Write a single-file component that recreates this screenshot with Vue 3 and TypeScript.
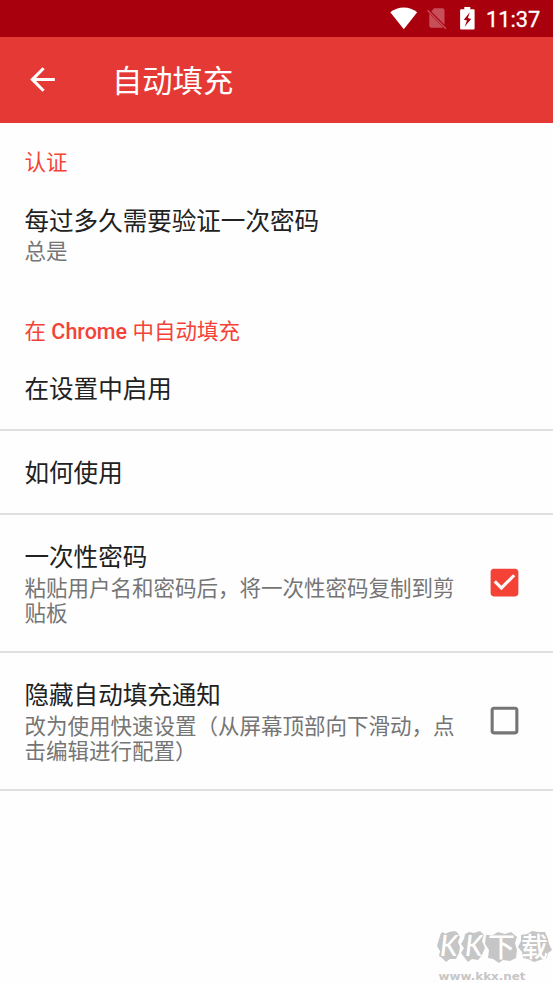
<script setup lang="ts">
import { ref } from 'vue'

interface Preference {
  title: string
  summary?: string
  checked?: boolean
}

interface HeadingPart {
  text: string
  latin?: boolean
}

interface Section {
  heading: HeadingPart[]
  divided: boolean
  items: Preference[]
}

const sections = ref<Section[]>([
  {
    heading: [{ text: '认证' }],
    divided: false,
    items: [{ title: '每过多久需要验证一次密码', summary: '总是' }],
  },
  {
    heading: [{ text: '在 ' }, { text: 'Chrome', latin: true }, { text: ' 中自动填充' }],
    divided: true,
    items: [
      { title: '在设置中启用' },
      { title: '如何使用' },
      { title: '一次性密码', summary: '粘贴用户名和密码后，将一次性密码复制到剪贴板', checked: true },
      { title: '隐藏自动填充通知', summary: '改为使用快速设置（从屏幕顶部向下滑动，点击编辑进行配置）', checked: false },
    ],
  },
])

function toggle(item: Preference) {
  if (item.checked !== undefined) item.checked = !item.checked
}
</script>

<template>
  <div class="screen">
    <div class="status">
      <svg class="wifi" width="28" height="23" viewBox="0 0 28 23">
        <path d="M.3 5.2C8-1.2 19.500-1.200 27.200 5.200L13.800 22.200Z" fill="#fff" />
      </svg>
      <svg class="sim" width="20" height="22" viewBox="0 0 20 22">
        <path d="M7 .3H15.500Q17.500 .3 17.500 2.300V16.800L4.300 3.600ZM2.300 5.500L16.500 19.700H4.300Q2.300 19.700 2.300 17.700Z" fill="#c74f5a" />
        <path d="M.5 2.300L19 20.800" stroke="#c74f5a" stroke-width="1.500" />
      </svg>
      <svg class="battery" width="15" height="23" viewBox="0 0 15 23">
        <path fill="#fff" fill-rule="evenodd" d="M4.300 0H10.300V2.300H13.500Q14.600 2.300 14.600 3.400V21.500Q14.600 22.600 13.500 22.600H1.200Q.1 22.600 .1 21.500V3.400Q.1 2.300 1.200 2.300H4.300ZM9.800 5.300L3.800 12.800L7 13.600L4.600 19.800L11.200 12L7.900 11Z" />
      </svg>
      <span class="time">11:37</span>
    </div>

    <header class="toolbar">
      <svg class="back" width="37" height="37" viewBox="0 0 24 24">
        <path fill="#fff" d="M20 11H7.830l5.590-5.590L12 4l-8 8 8 8 1.410-1.410L7.830 13H20v-2z" />
      </svg>
      <h1>自动填充</h1>
    </header>

    <main>
      <section v-for="(section, index) in sections" :key="index" :class="{ divided: section.divided }">
        <h2><span v-for="part in section.heading" :key="part.text" :class="{ latin: part.latin }">{{ part.text }}</span></h2>
        <div v-for="item in section.items" :key="item.title" class="row" :class="{ detailed: item.summary }" @click="toggle(item)">
          <div class="text">
            <div class="title">{{ item.title }}</div>
            <div v-if="item.summary" class="summary">{{ item.summary }}</div>
          </div>
          <svg v-if="item.checked !== undefined" class="box" width="37" height="37" viewBox="0 0 24 24">
            <path v-if="item.checked" fill="#f44336" d="M19 3H5c-1.110 0-2 .9-2 2v14c0 1.100.89 2 2 2h14c1.110 0 2-.9 2-2V5c0-1.100-.89-2-2-2zm-9 14l-5-5 1.410-1.410L10 14.170l7.590-7.590L19 8l-9 9z" />
            <path v-else fill="#757575" d="M19 5v14H5V5h14m0-2H5c-1.100 0-2 .9-2 2v14c0 1.100.9 2 2 2h14c1.100 0 2-.9 2-2V5c0-1.100-.9-2-2-2z" />
          </svg>
        </div>
      </section>
    </main>

    <svg class="mark" width="120" height="62" viewBox="0 -6 120 62">
      <g fill="#c6c6c6">
        <path d="M8 6L10 5L12 7L16 5L21 4L24 5L27 10L25 15L27 20L26 26L23 32L17 32L13 35L9 31L6 29L7 24L4 19L6 12Z" />
        <path d="M32 7L36 5L41 6L47 4L51 8L49 14L52 21L49 28L45 33L39 32L35 35L31 30L28 26L31 21L28 17L31 12Z" />
        <path d="M53 8L60 8L65 5L72 7L78 5L84 10L82 16L84 23L83 31L77 34L70 33L66 36L60 32L55 31L56 23L52 17Z" />
        <path d="M88 8L94 7L99 4L105 5L112 5L115 12L116 17L119 23L115 26L114 31L107 33L101 35L95 32L90 31L89 25L85 20L88 14Z" />
      </g>
      <g class="logo">
        <text class="letter" x="7" y="29">K</text>
        <text class="letter" x="32" y="29">K</text>
        <text x="55" y="30">下</text>
        <text x="88" y="30">载</text>
      </g>
      <text class="url" x="5.500" y="52.500" textLength="87" lengthAdjust="spacingAndGlyphs">www.kkx.net</text>
    </svg>
  </div>
</template>

<style>
body {
  margin: 0;
  background: #fefefe;
}
</style>

<style scoped>
.screen {
  position: relative;
  width: 553px;
  height: 983px;
  overflow: hidden;
  background: #fefefe;
  font-family: Roboto, "Noto Sans CJK SC", sans-serif;
}
.status {
  display: flex;
  justify-content: flex-end;
  height: 37px;
  padding-right: 13px;
  box-sizing: border-box;
  background: #a9000d;
}
.wifi {
  margin: 7px 9px 0 0;
}
.sim {
  margin: 8px 13px 0 0;
}
.battery {
  margin: 7px 11px 0 0;
}
.time {
  width: 54px;
  color: #fff;
  font-size: 21.8px;
  font-weight: 400;
  line-height: 39px;
  white-space: nowrap;
  -webkit-text-stroke: 0.3px #fff;
}
.toolbar {
  display: flex;
  align-items: center;
  box-sizing: border-box;
  height: 86px;
  padding-left: 24px;
  background: #e53935;
}
.back {
  flex: none;
  margin-bottom: 1px;
}
h1 {
  margin: 4px 0 0 51px;
  color: #fff;
  font-size: 30.3px;
  font-weight: 400;
  line-height: 40px;
}
h2 {
  margin: 0;
  padding: 27px 24.5px 0;
  color: #f44336;
  font-size: 21.5px;
  font-weight: 400;
  line-height: 26px;
  height: 26px;
  white-space: pre;
}
.latin {
  font-weight: 500;
}
section {
  height: 169px;
}
.divided h2 {
  padding-bottom: 2px;
}
.row {
  display: flex;
  align-items: center;
  box-sizing: border-box;
  height: 117px;
  padding: 0 30.5px 0 24.5px;
}
.divided .row {
  height: 84px;
  border-bottom: 2px solid #e0e0e0;
}
.divided .row.detailed {
  height: 138px;
}
.text {
  flex: none;
  width: 436px;
}
.divided .text {
  padding-top: 4px;
}
.divided .detailed .text {
  padding-top: 1px;
}
.title {
  color: #212121;
  font-size: 24.55px;
  line-height: 32px;
}
.summary {
  margin-top: 1px;
  color: #757575;
  font-size: 21.5px;
  line-height: 25px;
}
.divided .summary {
  margin: 2px 0 -1px;
}
.box {
  flex: none;
  margin: 0 0 2px auto;
}
.mark {
  position: absolute;
  right: 0;
  bottom: 0;
}
.logo text {
  fill: #fff;
  font-family: "Noto Sans CJK SC", sans-serif;
  font-size: 27px;
  font-weight: 500;
}
.logo .letter {
  font-family: Lato, sans-serif;
  font-style: italic;
  font-size: 28px;
}
.url {
  fill: #c6c6c6;
  font-family: "DejaVu Sans", sans-serif;
  font-size: 11px;
  font-weight: 700;
}
</style>
